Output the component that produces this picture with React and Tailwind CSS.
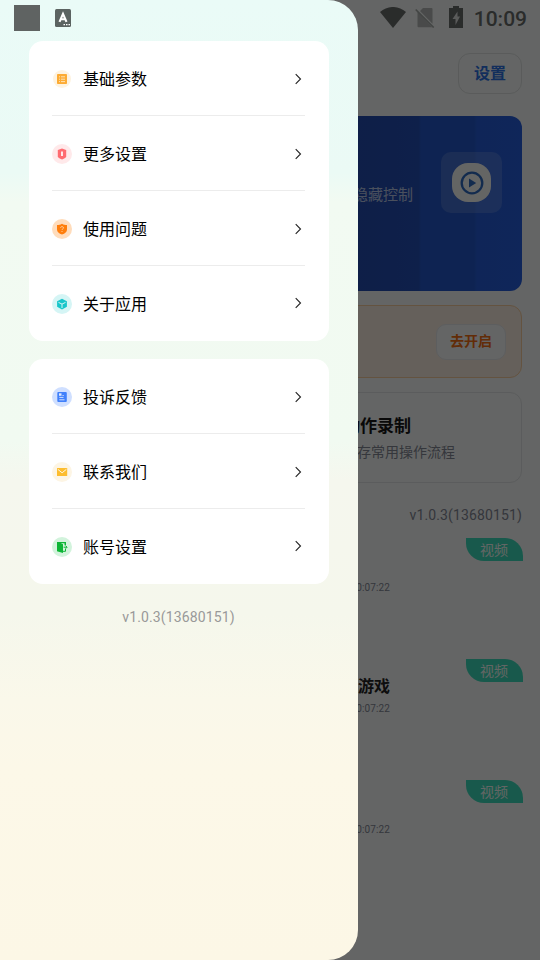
import React from "react";
import clsx from "clsx";

const ListIcon = () => (
  <svg viewBox="0 0 20 20" className="size-5">
    <circle cx="10" cy="10" r="9" fill="#fef3e0" />
    <rect x="5" y="5" width="10" height="10" rx="0.8" fill="#fdab33" />
    <path d="M7 7.8h1M9 7.8h4M7 10.2h1M9 10.2h4M7 12.6h1M9 12.6h4" stroke="#fff0d2" strokeWidth="0.8" />
  </svg>
);

const MoreIcon = () => (
  <svg viewBox="0 0 20 20" className="size-5">
    <circle cx="10" cy="10" r="10" fill="#ffe9ea" />
    <path d="M10 4.5 14.2 6v6.2c0 1.3-1.7 2.4-4.2 3.2-2.5-.8-4.2-1.900-4.200-3.200V6Z" fill="#ff6b70" />
    <path d="M10 7.500v4.500" stroke="#fff" strokeWidth="1.7" />
  </svg>
);

const HelpIcon = () => (
  <svg viewBox="0 0 20 20" className="size-5">
    <circle cx="10" cy="10" r="10" fill="#ffdcbb" />
    <path d="M10 4.8c1.6 1.1 3.2 1.3 5 1.3v4.4c0 2.4-2 4-5 5.1-3-1.1-5-2.7-5-5.1V6.100c1.800 0 3.400-.2 5-1.300Z" fill="#ff7d0a" />
    <path d="M8.600 8.800c0-1.700 2.900-1.600 2.900.1 0 1-1.500 1-1.500 2.100M10 12v1" stroke="#ffd2a4" strokeWidth="0.9" fill="none" />
  </svg>
);

const CubeIcon = () => (
  <svg viewBox="0 0 20 20" className="size-5">
    <circle cx="10" cy="10" r="10" fill="#d5f5f5" />
    <path d="m10 4.700 4.900 2.500v5.600L10 15.400l-4.900-2.600V7.200Z" fill="#17c6ca" />
    <path d="M6.500 8.400 10 10.100l3.500-1.700M10 10.100v4" stroke="#d5f5f5" strokeWidth="1" fill="none" />
  </svg>
);

const FeedbackIcon = () => (
  <svg viewBox="0 0 20 20" className="size-5">
    <circle cx="10" cy="10" r="10" fill="#cfdfff" />
    <rect x="5.300" y="5" width="9.500" height="10" rx="1" fill="#4080fb" />
    <path d="M7 6.300h2.500v2.500H7z" fill="#dce8ff" />
    <path d="M10.500 8.500h1.200M7.300 10.400h4.200M7.300 12.800h5.200" stroke="#dce8ff" strokeWidth="0.900" />
  </svg>
);

const MailIcon = () => (
  <svg viewBox="0 0 20 20" className="size-5">
    <circle cx="10" cy="10" r="10" fill="#fdf5e4" />
    <rect x="5" y="6" width="10.200" height="8" fill="#fdbd2e" />
    <path d="m5.800 7.300 4.300 3.500 4.300-3.500" stroke="#fff6de" strokeWidth="1" fill="none" />
  </svg>
);

const AccountIcon = () => (
  <svg viewBox="0 0 20 20" className="size-5">
    <circle cx="10" cy="10" r="10" fill="#d2f3dc" />
    <path d="M5 5h9v3.200h-1.500V6.200H8.700l2.300 1v8.900L5 14.200Z" fill="#0cb535" />
    <path d="M11 14.300h2.500v-2.300M11.600 10.200h3.200M13.500 8.600l1.600 1.600-1.600 1.600" stroke="#0cb535" strokeWidth="1" fill="none" />
  </svg>
);

const groups = [
  [
    { label: "基础参数", icon: ListIcon },
    { label: "更多设置", icon: MoreIcon },
    { label: "使用问题", icon: HelpIcon },
    { label: "关于应用", icon: CubeIcon },
  ],
  [
    { label: "投诉反馈", icon: FeedbackIcon },
    { label: "联系我们", icon: MailIcon },
    { label: "账号设置", icon: AccountIcon },
  ],
];

const videos = [
  { title: "", time: "10:07:22" },
  { title: "游戏", time: "10:07:22" },
  { title: "", time: "10:07:22" },
];

const MenuGroup = ({ items }) => (
  <div className="rounded-[14px] bg-white pl-[23px] pr-6">
    {items.map(({ label, icon: Icon }, i) => (
      <div
        key={label}
        className={clsx("flex h-[75px] items-center", i < items.length - 1 && "border-b border-[#ececec] pt-[2px]")}
      >
        <Icon />
        <span className="ml-[11px] flex-1 pt-[2px] text-base text-black">{label}</span>
        <svg viewBox="0 0 8 12" className="mb-px mr-[3px] h-3 w-2" fill="none" stroke="#222" strokeWidth="1.1">
          <path d="m1.700 1.200 4.800 4.800-4.800 4.800" />
        </svg>
      </div>
    ))}
  </div>
);

const Drawer = () => (
  <aside className="absolute left-0 top-0 h-[960px] w-[358px] rounded-r-[30px] bg-[linear-gradient(180deg,#eafbf7_0%,#ebfaf5_18%,#f2faf2_21%,#f1faf1_46%,#f5f7ee_50%,#f5f7ec_64%,#faf8ea_73%,#fcf8e8_80%,#fcf7e6_100%)] px-[29px]">
    <div className="-ml-[15px] flex h-[41px] items-start">
      <div className="mt-[5px] size-[26px] bg-[#5f6362]" />
      <svg viewBox="0 0 16 18" className="ml-[15px] mt-[9px] h-[18px] w-4">
        <rect width="16" height="18" rx="1.500" fill="#5b6361" />
        <path d="m4.500 12.900 3.500-8 3.500 8M6 10.300h4" stroke="#fff" strokeWidth="2.100" fill="none" />
        <path d="M8.500 15.700H10M11 15.700h1.500M13.500 15.700H15" stroke="#fff" strokeWidth="1.200" />
      </svg>
    </div>
    <div className="flex flex-col gap-[18px]">
      {groups.map((items, i) => (
        <MenuGroup key={i} items={items} />
      ))}
    </div>
    <p className="mt-[23px] pr-px text-center text-sm tracking-[0.13px] text-[#999]">v1.0.3(13680151)</p>
  </aside>
);

const StatusIcons = () => (
  <div className="flex h-9 items-start justify-end pr-[13px]">
    <svg viewBox="0 0 26 21" className="mt-[7px] h-[21px] w-[26px]" fill="#6a6e6c">
      <path d="M0 5C7.500-1.700 18.500-1.700 26 5L13 21Z" />
    </svg>
    <svg viewBox="0 0 20 20" className="ml-[9px] mt-2 size-5">
      <path d="M8 0h8.500q1 0 1 1v14.800L5 3.100ZM2.500 3.500 17.200 19.200H3.500q-1 0-1-1Z" fill="#b6bab8" />
      <path d="m.7 1.500 18 18" stroke="#a9adab" strokeWidth="1.700" />
    </svg>
    <svg viewBox="0 0 14 22" className="ml-[14px] mt-[6px] h-[22px] w-[14px]">
      <path d="M4 0h6v2h4v20H0V2h4Z" fill="#6a6e6c" />
      <path d="M8.500 5.500 3.500 13h3v6L11 10.500H8.500Z" fill="#e0e3e2" />
    </svg>
    <span className="ml-[11px] mt-[5px] text-[21px] font-medium leading-7 text-[#6a6e6c]">10:09</span>
  </div>
);

const HomePage = () => (
  <div className="h-[960px] w-[540px] bg-[#fafdfc]">
    <StatusIcons />
    <div className="flex justify-end pr-[18px] pt-[17px]">
      <button className="flex h-[41px] w-16 items-center justify-center rounded-xl border border-[#e0e3e3] text-base font-bold text-[#2f74e6]">
        设置
      </button>
    </div>

    <section className="ml-[18px] mr-[18px] mt-[22px] flex h-[175px] items-start justify-end rounded-xl bg-[linear-gradient(90deg,#1e3f96_0%,#2450b9_79.500%,#2559cd_80%,#2559cd_90.500%,#265edb_91%,#265fe0_100%)] pr-5 pt-9">
      <span className="mr-[28px] mt-[31px] text-[15px] leading-6 text-[#bac8e8]">隐藏控制</span>
      <div className="flex size-[61px] items-center justify-center rounded-[10px] bg-white/15">
        <div className="flex size-[39px] items-center justify-center rounded-[16px] bg-[#fbfcf9]">
          <svg viewBox="0 0 24 24" className="size-6">
            <circle cx="12" cy="12" r="10.300" fill="none" stroke="#2f6bc4" strokeWidth="2.300" />
            <path d="m9 7.500 7.200 4.500L9 16.500Z" fill="#2f6bc4" />
          </svg>
        </div>
      </div>
    </section>

    <section className="mx-[18px] mt-[14px] flex h-[73px] items-center justify-end rounded-xl border border-[#f9cfa0] bg-[#fdf1e4] pr-[15px]">
      <button className="flex h-9 w-[70px] items-center justify-center rounded-[10px] border border-[#e8eaed] bg-[#fafdfd] pb-px text-sm font-bold text-[#f66f12]">
        去开启
      </button>
    </section>

    <section className="mx-[18px] mt-[14px] flex h-[91px] flex-col rounded-xl border border-[#e3e6e8] pl-[237px] pt-5">
      <div className="mr-[110px] flex justify-end whitespace-nowrap text-[17px] font-bold leading-[26px] text-[#171717]">
        动作录制
      </div>
      <div className="mr-[66px] flex justify-end whitespace-nowrap pt-[3px] text-sm leading-5 text-[#858997]">
        保存常用操作流程
      </div>
    </section>

    <p className="mr-[18px] mt-[22px] text-right text-sm leading-5 tracking-[0.13px] text-[#858997]">v1.0.3(13680151)</p>

    <div className="mt-[13px]">
      {videos.map((video, i) => (
        <article key={i} className="flex h-[121px] items-start justify-end pr-[17px]">
          <div className="mr-[76px] mt-4 text-right">
            <h3 className="h-6 text-base font-bold leading-6 text-[#252525]">{video.title}</h3>
            <p className="mt-[3px] text-[10px] leading-[14px] tracking-[0.1px] text-[#858997]">{video.time}</p>
          </div>
          <span className="flex h-[23px] w-[57px] items-center justify-center rounded-bl-[18px] rounded-tr-[18px] bg-[#3ddfbd] pr-px text-sm text-[#f5fffc]">
            视频
          </span>
        </article>
      ))}
    </div>
  </div>
);

export default function App() {
  return (
    <div className="relative h-[960px] w-[540px] overflow-hidden font-[Roboto,'Noto_Sans_CJK_SC',sans-serif]">
      <HomePage />
      <div className="absolute inset-0 bg-black/60" />
      <Drawer />
    </div>
  );
}
